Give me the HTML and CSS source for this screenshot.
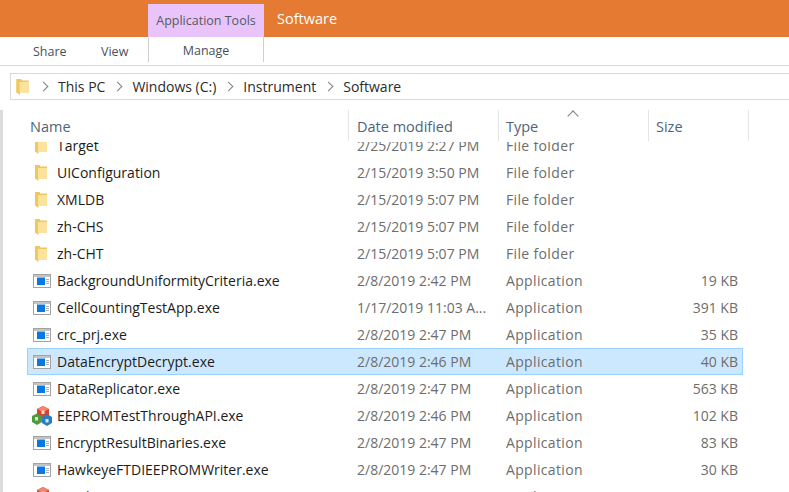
FILE: index.html
```html
<!DOCTYPE html>
<html lang="en">
<head>
  <meta charset="UTF-8">
  <title>Software</title>
  <link rel="stylesheet" href="styles.css">
</head>
<body>
  <svg class="defs" width="0" height="0">
    <symbol id="folder" viewBox="0 0 12 17">
      <path d="M0 1h4.500l1 1.500H12V14.500H0z" fill="#eec65f"/>
      <path d="M0 1.500h3.500V17L0 14.500z" fill="#f0c860"/>
      <path d="M3 4h9v10.500H3z" fill="#fbe39c"/>
    </symbol>
    <symbol id="app" viewBox="0 0 18 14">
      <rect x="0.500" y="0.500" width="17" height="13" fill="#fff" stroke="#a3a3a3"/>
      <rect x="1" y="1" width="16" height="2" fill="#c4c4c4"/>
      <rect x="4" y="3.500" width="8" height="7.500" fill="#0a78e0"/>
      <path d="M13 5.500h3M13 7.500h3M13 9.500h3" stroke="#adadad"/>
    </symbol>
    <symbol id="cubes" viewBox="0 0 20 20">
      <path d="M5 3l6-3 6 3v8l-6 3-6-3z" fill="#d8432c"/>
      <path d="M11 0l6 3-6 3-6-3z" fill="#f0876c"/>
      <path d="M9.500 4.500h3v3.500h-3z" fill="#fbd9cf"/>
      <path d="M0 10l5-2.500 5 2.500v6l-5 3-5-3z" fill="#4f9a3c"/>
      <path d="M3 11h3v3.500H3z" fill="#d5e8c9"/>
      <path d="M10 11l5-3 5 3v6l-5 3-5-3z" fill="#2a7dc0"/>
      <path d="M13.500 13h3v3.500h-3z" fill="#d0e4f4"/>
    </symbol>
  </svg>

  <header class="title-bar">
    <div class="context-tab">Application Tools</div>
    <div class="window-title">Software</div>
  </header>

  <nav class="ribbon">
    <span class="ribbon-tab tab-share">Share</span>
    <span class="ribbon-tab tab-view">View</span>
    <span class="ribbon-tab tab-manage">Manage</span>
  </nav>

  <div class="address-bar">
    <svg class="crumb-folder"><use href="#folder"/></svg>
    <span class="chevron"></span><span class="crumb">This PC</span>
    <span class="chevron"></span><span class="crumb">Windows (C:)</span>
    <span class="chevron"></span><span class="crumb">Instrument</span>
    <span class="chevron"></span><span class="crumb">Software</span>
  </div>

  <main class="explorer">
    <div class="nav-edge"></div>
    <section class="file-pane">
      <div class="list-head">
        <div class="head-cell head-name">Name</div>
        <div class="head-cell head-date">Date modified</div>
        <div class="head-cell head-type">Type</div>
        <div class="head-cell head-size">Size</div>
        <span class="sort-arrow"></span>
      </div>
      <div class="list-view">
        <div class="list-rows">
          <div class="row"><span class="name"><svg class="icon-folder"><use href="#folder"/></svg>Target</span><span class="cell">2/25/2019 2:27 PM</span><span class="cell type">File folder</span><span class="cell size"></span></div>
          <div class="row"><span class="name"><svg class="icon-folder"><use href="#folder"/></svg>UIConfiguration</span><span class="cell">2/15/2019 3:50 PM</span><span class="cell type">File folder</span><span class="cell size"></span></div>
          <div class="row"><span class="name"><svg class="icon-folder"><use href="#folder"/></svg>XMLDB</span><span class="cell">2/15/2019 5:07 PM</span><span class="cell type">File folder</span><span class="cell size"></span></div>
          <div class="row"><span class="name"><svg class="icon-folder"><use href="#folder"/></svg>zh-CHS</span><span class="cell">2/15/2019 5:07 PM</span><span class="cell type">File folder</span><span class="cell size"></span></div>
          <div class="row"><span class="name"><svg class="icon-folder"><use href="#folder"/></svg>zh-CHT</span><span class="cell">2/15/2019 5:07 PM</span><span class="cell type">File folder</span><span class="cell size"></span></div>
          <div class="row"><span class="name"><svg class="icon-app"><use href="#app"/></svg>BackgroundUniformityCriteria.exe</span><span class="cell">2/8/2019 2:42 PM</span><span class="cell type">Application</span><span class="cell size">19 KB</span></div>
          <div class="row"><span class="name"><svg class="icon-app"><use href="#app"/></svg>CellCountingTestApp.exe</span><span class="cell">1/17/2019 11:03 A...</span><span class="cell type">Application</span><span class="cell size">391 KB</span></div>
          <div class="row"><span class="name"><svg class="icon-app"><use href="#app"/></svg>crc_prj.exe</span><span class="cell">2/8/2019 2:47 PM</span><span class="cell type">Application</span><span class="cell size">35 KB</span></div>
          <div class="row selected"><span class="name"><svg class="icon-app"><use href="#app"/></svg>DataEncryptDecrypt.exe</span><span class="cell">2/8/2019 2:46 PM</span><span class="cell type">Application</span><span class="cell size">40 KB</span></div>
          <div class="row"><span class="name"><svg class="icon-app"><use href="#app"/></svg>DataReplicator.exe</span><span class="cell">2/8/2019 2:47 PM</span><span class="cell type">Application</span><span class="cell size">563 KB</span></div>
          <div class="row"><span class="name"><svg class="icon-cubes"><use href="#cubes"/></svg>EEPROMTestThroughAPI.exe</span><span class="cell">2/8/2019 2:46 PM</span><span class="cell type">Application</span><span class="cell size">102 KB</span></div>
          <div class="row"><span class="name"><svg class="icon-app"><use href="#app"/></svg>EncryptResultBinaries.exe</span><span class="cell">2/8/2019 2:47 PM</span><span class="cell type">Application</span><span class="cell size">83 KB</span></div>
          <div class="row"><span class="name"><svg class="icon-app"><use href="#app"/></svg>HawkeyeFTDIEEPROMWriter.exe</span><span class="cell">2/8/2019 2:47 PM</span><span class="cell type">Application</span><span class="cell size">30 KB</span></div>
          <div class="row"><span class="name"><svg class="icon-cubes"><use href="#cubes"/></svg>HawkeyeWixFr.exe</span><span class="cell">2/8/2019 2:47 PM</span><span class="cell type">Application</span><span class="cell size">1,088 KB</span></div>
        </div>
      </div>
    </section>
  </main>
</body>
</html>
```

FILE: styles.css
```css
html,
body {
  height: 492px;
  margin: 0;
  overflow: hidden;
}

body {
  background: #ffffff;
  font-family: "Open Sans", "Noto Sans", sans-serif;
  font-size: 14px;
  color: #1c1c1c;
}

.defs {
  position: absolute;
}

.title-bar {
  display: flex;
  height: 37px;
  padding-left: 148px;
  align-items: flex-end;
  background: #e57a33;
  box-sizing: border-box;
}

.context-tab {
  width: 116px;
  height: 33px;
  line-height: 34px;
  text-align: center;
  font-size: 12.500px;
  color: #555a66;
  background: #e8c4fa;
}

.window-title {
  align-self: center;
  margin-left: 13px;
  font-size: 14.500px;
  color: #ffffff;
}

.ribbon {
  display: flex;
  height: 28px;
  align-items: center;
  border-bottom: 1px solid #d9d9d9;
  font-size: 12.500px;
  color: #4a4f5c;
}

.ribbon-tab {
  display: block;
  text-align: center;
}

.tab-share {
  margin-left: 33px;
  width: 33px;
}

.tab-view {
  margin-left: 35px;
  width: 27px;
}

.tab-manage {
  margin-left: 20px;
  width: 116px;
  height: 25px;
  line-height: 28px;
  align-self: flex-start;
  box-sizing: border-box;
  border-left: 1px solid #cfcfcf;
  border-right: 1px solid #cfcfcf;
}

.address-bar {
  display: flex;
  align-items: center;
  height: 27px;
  margin: 7px 0 0 10px;
  border: 1px solid #d9d9d9;
  border-right: 0;
  color: #2b2b2b;
  box-sizing: border-box;
}

.crumb-folder {
  width: 13px;
  height: 17px;
  margin-left: 5px;
  margin-right: 11px;
}

.chevron {
  width: 7px;
  height: 7px;
  margin-right: 11px;
  border-top: 1.500px solid #808080;
  border-right: 1.500px solid #808080;
  transform: rotate(45deg);
  box-sizing: border-box;
}

.crumb {
  margin-right: 9px;
}

.explorer {
  display: flex;
  height: 392px;
  padding-top: 10px;
  box-sizing: border-box;
}

.nav-edge {
  width: 3px;
  background: #dcdcdc;
}

.file-pane {
  position: relative;
  width: 746px;
  margin-left: 24px;
}

.list-head {
  display: flex;
  height: 32px;
  font-size: 14.500px;
  color: #4f6478;
}

.head-cell {
  box-sizing: border-box;
  height: 31px;
  line-height: 34px;
  border-right: 1px solid #e3e5e7;
}

.head-name {
  width: 322px;
  padding-left: 3px;
}

.head-date,
.head-type {
  width: 150px;
  padding-left: 8px;
}

.head-type {
  padding-left: 7px;
}

.head-size {
  width: 100px;
  padding-left: 7px;
}

.sort-arrow {
  position: absolute;
  left: 542px;
  top: 2px;
  width: 7px;
  height: 7px;
  border-top: 1px solid #808080;
  border-left: 1px solid #808080;
  transform: rotate(45deg);
}

.list-view {
  height: 350px;
  overflow: hidden;
}

.list-rows {
  width: 716px;
  margin-top: -10px;
}

.row {
  display: grid;
  grid-template-columns: 330px 149px 1fr 70px;
  align-items: center;
  height: 27px;
  color: #6d6d6d;
}

.row.selected {
  background: #cce8ff;
  box-shadow: inset 0 0 0 1px #99d1ff;
}

.name {
  display: flex;
  align-items: center;
  color: #1c1c1c;
  white-space: nowrap;
}

.type {
  letter-spacing: 0.350px;
}

.icon-app {
  width: 18px;
  height: 14px;
  margin: 0 6px;
}

.icon-folder {
  width: 12px;
  height: 17px;
  margin: 0 10px 0 8px;
}

.icon-cubes {
  width: 20px;
  height: 20px;
  margin: 0 5px;
}

.size {
  text-align: right;
  padding-right: 5px;
}
```
